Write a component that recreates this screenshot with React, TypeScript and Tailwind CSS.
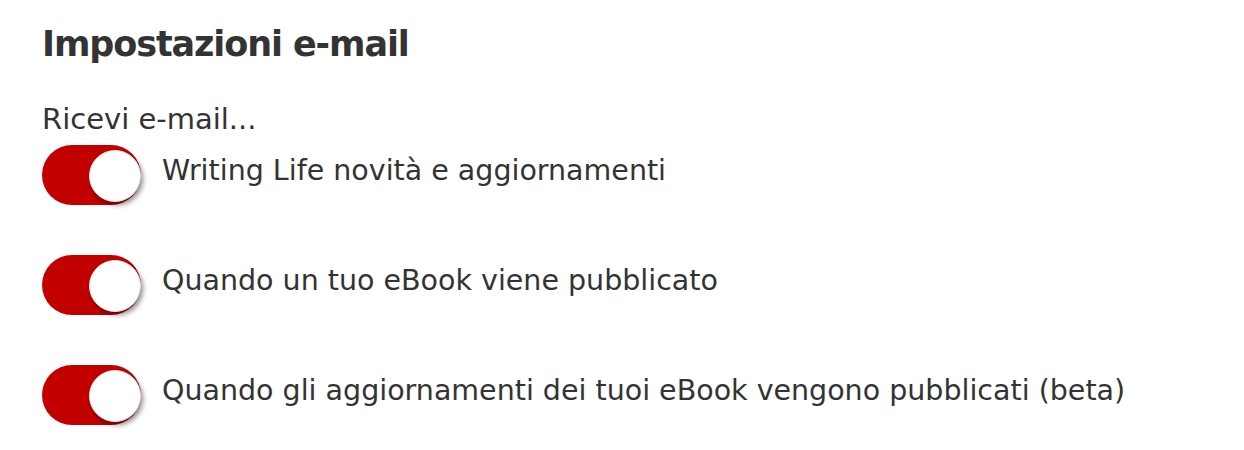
import { useState } from 'react';

const options = [
  'Writing Life novità e aggiornamenti',
  'Quando un tuo eBook viene pubblicato',
  'Quando gli aggiornamenti dei tuoi eBook vengono pubblicati (beta)',
];

const Toggle = ({ on, onClick }: { on: boolean; onClick: () => void }) => (
  <button
    onClick={onClick}
    className={`relative w-[99px] h-[60px] shrink-0 rounded-full ${on ? 'bg-[#c20000]' : 'bg-[#cccccc]'}`}
  >
    <span
      className={`absolute top-[5px] w-[52px] h-[52px] rounded-full bg-white border border-[#e4e4e4] shadow-[2px_3px_5px_rgba(0,0,0,0.45)] ${on ? 'left-[47px]' : 'left-[4px]'}`}
    />
  </button>
);

export default function App() {
  const [checked, setChecked] = useState([true, true, true]);

  return (
    <div className="w-[1244px] h-[450px] bg-white px-[42px] pt-[20px] text-[#333] font-['DejaVu_Sans',sans-serif]">
      <h2 className="text-[35px] font-bold leading-[48px] tracking-[-1.1px]">Impostazioni e-mail</h2>
      <p className="mt-[34px] text-[29px] leading-[34px]">Ricevi e-mail...</p>
      <div className="mt-[9px] flex flex-col gap-[50px]">
        {options.map((label, i) => (
          <label key={i} className="flex items-center gap-[21px]">
            <Toggle
              on={checked[i]}
              onClick={() => setChecked(checked.map((c, j) => (j === i ? !c : c)))}
            />
            <span className="text-[28.5px] leading-[34px] pb-[8px]">{label}</span>
          </label>
        ))}
      </div>
    </div>
  );
}
